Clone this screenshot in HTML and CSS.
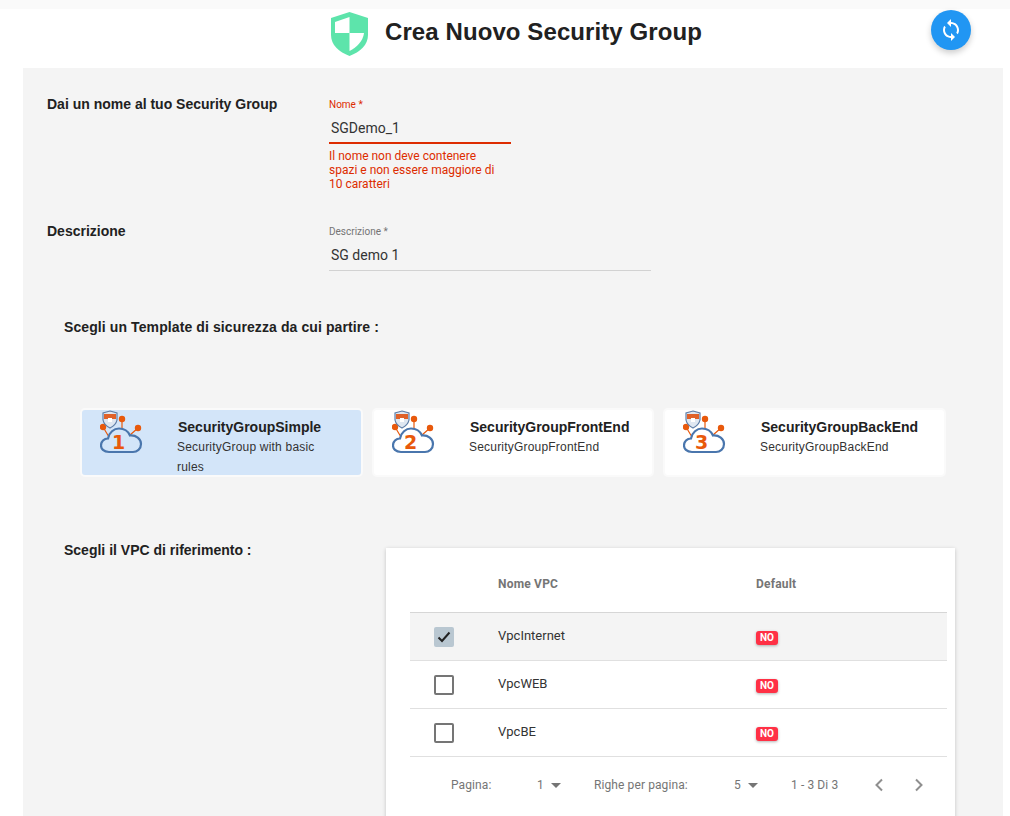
FILE: index.html
```html
<!DOCTYPE html>
<html lang="en">
<head>
    <meta charset="UTF-8">
    <title>Crea Nuovo Security Group</title>
    <link rel="stylesheet" href="styles.css">
</head>
<body>

    <svg class="defs" width="0" height="0">
        <symbol id="cloud" viewBox="0 0 44 46">
            <path d="M9 27 L3 17 M22 19 L22 9 M30 25 L38 18" stroke="#e8590c" stroke-width="1.2" fill="none"/>
            <circle cx="3" cy="17" r="3.2" fill="#e8590c"/>
            <circle cx="22" cy="9" r="3.2" fill="#e8590c"/>
            <circle cx="38" cy="18" r="3.2" fill="#e8590c"/>
            <path d="M10 1 L17 3 V10 Q16 15 10 18 Q4 15 3 10 V3 Z" fill="#dfe7f1" stroke="#5f7fa8" stroke-width="1.2"/>
            <path d="M4 4 H16 V9 H4 Z" fill="#e0622a"/>
            <path d="M8 8 H12 V12 H8 Z" fill="#fff"/>
            <path d="M9 42 C3.500 42 1 38.500 1 35.500 C1 31.500 4 28.500 8 28.500 C9 22.500 14 18.500 19 18.500 C24 18.500 28 21 30 25.500 C36 25 41 29 41 34 C41 39 37 42 33 42 Z" fill="none" stroke="#4a76ad" stroke-width="2.2"/>
        </symbol>
    </svg>

    <div class="top-strip"></div>

    <header class="page-header">
        <svg class="shield" width="37" height="44" viewBox="0 0 37 44">
            <path d="M18.500 0 L37 6 V23 C37 33 29 40 18.500 44 C8 40 0 33 0 23 V6 Z" fill="#5de4ab"/>
            <path d="M18.500 5 V21 H4 V10 Z" fill="#fff"/>
            <path d="M18.500 21 H33 C32 29 26 35 18.500 39 Z" fill="#fff"/>
        </svg>
        <h1>Crea Nuovo Security Group</h1>
        <button class="refresh-btn">
            <svg width="24" height="24" viewBox="0 0 24 24">
                <path fill="#fff" d="M12 4V1L8 5l4 4V6c3.310 0 6 2.690 6 6 0 1.010-.25 1.970-.7 2.800l1.460 1.460C19.540 15.030 20 13.570 20 12c0-4.420-3.580-8-8-8zm0 14c-3.310 0-6-2.690-6-6 0-1.010.25-1.970.7-2.800L5.240 7.740C4.460 8.970 4 10.430 4 12c0 4.420 3.580 8 8 8v3l4-4-4-4v3z"/>
            </svg>
        </button>
    </header>

    <main class="panel">
        <div class="form-row name-row">
            <div class="row-label">Dai un nome al tuo Security Group</div>
            <div class="field field-error">
                <label>Nome *</label>
                <div class="field-value">SGDemo_1</div>
                <p class="field-help">Il nome non deve contenere spazi e non essere maggiore di 10 caratteri</p>
            </div>
        </div>

        <div class="form-row desc-row">
            <div class="row-label">Descrizione</div>
            <div class="field field-wide">
                <label>Descrizione *</label>
                <div class="field-value">SG demo 1</div>
            </div>
        </div>

        <div class="section-label template-label">Scegli un Template di sicurezza da cui partire :</div>

        <div class="templates">
            <div class="template selected">
                <svg class="cloud-icon" viewBox="0 0 44 46"><use href="#cloud"/><text x="18.500" y="39" class="digit">1</text></svg>
                <div class="template-text">
                    <div class="template-title">SecurityGroupSimple</div>
                    <div class="template-desc">SecurityGroup with basic rules</div>
                </div>
            </div>
            <div class="template">
                <svg class="cloud-icon" viewBox="0 0 44 46"><use href="#cloud"/><text x="18.500" y="39" class="digit">2</text></svg>
                <div class="template-text">
                    <div class="template-title">SecurityGroupFrontEnd</div>
                    <div class="template-desc">SecurityGroupFrontEnd</div>
                </div>
            </div>
            <div class="template">
                <svg class="cloud-icon" viewBox="0 0 44 46"><use href="#cloud"/><text x="18.500" y="39" class="digit">3</text></svg>
                <div class="template-text">
                    <div class="template-title">SecurityGroupBackEnd</div>
                    <div class="template-desc">SecurityGroupBackEnd</div>
                </div>
            </div>
        </div>

        <div class="vpc-row">
            <div class="section-label vpc-label">Scegli il VPC di riferimento :</div>
            <div class="vpc-card">
                <div class="vpc-table">
                    <div class="vpc-head">
                        <div class="col-check"></div>
                        <div class="col-name">Nome VPC</div>
                        <div>Default</div>
                    </div>
                    <div class="vpc-line checked">
                        <div class="col-check">
                            <span class="checkbox on">
                                <svg width="14" height="12" viewBox="0 0 14 12"><path d="M1.500 6.500 L5 10 L12.500 1.500" fill="none" stroke="#222" stroke-width="2"/></svg>
                            </span>
                        </div>
                        <div class="col-name">VpcInternet</div>
                        <div><span class="badge">NO</span></div>
                    </div>
                    <div class="vpc-line">
                        <div class="col-check"><span class="checkbox"></span></div>
                        <div class="col-name">VpcWEB</div>
                        <div><span class="badge">NO</span></div>
                    </div>
                    <div class="vpc-line">
                        <div class="col-check"><span class="checkbox"></span></div>
                        <div class="col-name">VpcBE</div>
                        <div><span class="badge">NO</span></div>
                    </div>
                </div>
                <div class="pager">
                    <span class="pager-page">Pagina:</span>
                    <span class="pager-num first">1</span><span class="caret"></span>
                    <span class="pager-rows">Righe per pagina:</span>
                    <span class="pager-num second">5</span><span class="caret"></span>
                    <span class="pager-count">1 - 3 Di 3</span>
                    <svg class="chev prev" width="10" height="14" viewBox="0 0 10 14"><path d="M8 1.500 L2.500 7 L8 12.500" fill="none" stroke="#8f8f8f" stroke-width="2"/></svg>
                    <svg class="chev next" width="10" height="14" viewBox="0 0 10 14"><path d="M2 1.500 L7.500 7 L2 12.500" fill="none" stroke="#8f8f8f" stroke-width="2"/></svg>
                </div>
            </div>
        </div>
    </main>

</body>
</html>
```

FILE: styles.css
```css
html, body {
    margin: 0;
    padding: 0;
    height: 816px;
    overflow: hidden;
}
body {
    background: #fff;
    font-family: Roboto, "Liberation Sans", sans-serif;
    color: #212121;
}
.defs {
    display: block;
    height: 0;
}
.top-strip {
    height: 9px;
    background: #fafafa;
}

/* header */
.page-header {
    height: 59px;
    display: flex;
    align-items: flex-start;
}
.shield {
    margin: 3px 0 0 331px;
}
.page-header h1 {
    margin: 8px 0 0 17px;
    font-family: "Liberation Sans", sans-serif;
    font-size: 24px;
    line-height: 30px;
    font-weight: bold;
    letter-spacing: 0.09px;
    color: #212121;
}
.refresh-btn {
    width: 40px;
    height: 40px;
    margin: 1px 0 0 229px;
    padding: 0;
    border: none;
    border-radius: 50%;
    background: #2196f3;
    box-shadow: 0 3px 6px rgba(0, 0, 0, 0.2);
    display: flex;
    align-items: center;
    justify-content: center;
}

/* grey panel */
.panel {
    width: 980px;
    height: 748px;
    margin-left: 23px;
    background: #f4f4f4;
    overflow: hidden;
}
.form-row {
    display: flex;
}
.name-row {
    height: 127px;
    padding-top: 29px;
}
.desc-row {
    height: 72px;
}
.row-label, .section-label {
    font-family: "Liberation Sans", sans-serif;
    font-size: 14px;
    font-weight: bold;
    line-height: 16px;
    color: #212121;
}
.row-label {
    width: 282px;
    margin: -1px 0 0 24px;
}
.field {
    width: 182px;
}
.field-wide {
    width: 322px;
}
.field label {
    display: block;
    font-size: 10px;
    line-height: 12px;
    margin-top: 2px;
    color: #757575;
}
.field-value {
    font-size: 14px;
    line-height: 20px;
    padding: 7px 0 4px 2px;
    border-bottom: 1px solid #d2d2d2;
    color: #333;
}
.field-wide .field-value {
    padding-bottom: 5px;
}
.field-error label {
    color: #dd2c00;
}
.field-error .field-value {
    border-bottom: 2px solid #dd2c00;
}
.field-help {
    margin: 5px 0 0;
    width: 175px;
    font-size: 12px;
    line-height: 14px;
    color: #dd2c00;
}
.template-label {
    margin: 23px 0 0 41px;
    letter-spacing: 0.1px;
}
.templates {
    display: flex;
    gap: 9px;
    margin: 73px 0 0 57px;
}
.template {
    box-sizing: border-box;
    width: 282px;
    height: 69px;
    display: flex;
    background: #fff;
    border: 2px solid #fafafa;
    border-radius: 5px;
    overflow: hidden;
}
.template.selected {
    background: #d3e5f9;
    width: 283px;
}
.template:last-child {
    width: 283px;
}
.cloud-icon {
    width: 44px;
    height: 46px;
    margin: 0 0 0 18px;
    flex: none;
}
.digit {
    font-family: "DejaVu Sans", sans-serif;
    font-size: 19px;
    font-weight: bold;
    fill: #e8590c;
    text-anchor: middle;
}
.template-text {
    margin: 8px 0 0 34px;
    width: 150px;
}
.template-title {
    font-family: "Liberation Sans", sans-serif;
    font-size: 14px;
    font-weight: bold;
    line-height: 19px;
    white-space: nowrap;
    color: #212121;
}
.template-desc {
    font-family: "Liberation Sans", sans-serif;
    font-size: 12px;
    line-height: 20px;
    letter-spacing: 0.2px;
    color: #333;
    margin-left: -1px;
}

/* vpc table */
.vpc-row {
    display: flex;
    margin-top: 71px;
}
.vpc-label {
    width: 322px;
    margin: -6px 0 0 41px;
    flex: none;
}
.vpc-card {
    box-sizing: border-box;
    width: 569px;
    height: 300px;
    background: #fff;
    box-shadow: 0 1px 4px rgba(0, 0, 0, 0.2);
    padding: 16px 8px 0 24px;
}
.vpc-head, .vpc-line {
    display: flex;
    align-items: center;
}
.vpc-head {
    height: 40px;
    padding-bottom: 8px;
    font-size: 12px;
    font-weight: bold;
    letter-spacing: 0.2px;
    color: #757575;
    border-bottom: 1px solid #d6d6d6;
}
.vpc-line {
    height: 47px;
    font-size: 13px;
    border-bottom: 1px solid #e0e0e0;
    color: #333;
}
.vpc-line.checked {
    background: #f4f4f4;
}
.col-check {
    width: 88px;
    padding-left: 24px;
    box-sizing: border-box;
    flex: none;
    display: flex;
}
.col-name {
    width: 258px;
    flex: none;
}
.vpc-line .col-name {
    margin-top: -2px;
}
.checkbox {
    box-sizing: border-box;
    width: 20px;
    height: 20px;
    border: 2px solid #757575;
    border-radius: 2px;
    display: flex;
    align-items: center;
    justify-content: center;
}
.checkbox.on {
    border: none;
    background: #b9c7d1;
}
.badge {
    display: block;
    width: 22px;
    height: 14px;
    margin-top: 2px;
    background: #ff3045;
    border-radius: 3px;
    box-shadow: 0 1px 3px rgba(0, 0, 0, 0.3);
    color: #fff;
    font-size: 10px;
    font-weight: bold;
    line-height: 14px;
    text-align: center;
}

/* pager */
.pager {
    display: flex;
    align-items: center;
    height: 56px;
    font-size: 12px;
    letter-spacing: 0.1px;
    color: #757575;
}
.pager-page {
    margin-left: 41px;
    width: 86px;
}
.pager-num {
    width: 14px;
}
.caret {
    width: 0;
    height: 0;
    border-left: 5px solid transparent;
    border-right: 5px solid transparent;
    border-top: 5px solid #757575;
}
.pager-rows {
    margin-left: 33px;
    width: 140px;
}
.pager-count {
    margin-left: 33px;
    width: 83px;
}
.chev.next {
    margin-left: 30px;
}
```
